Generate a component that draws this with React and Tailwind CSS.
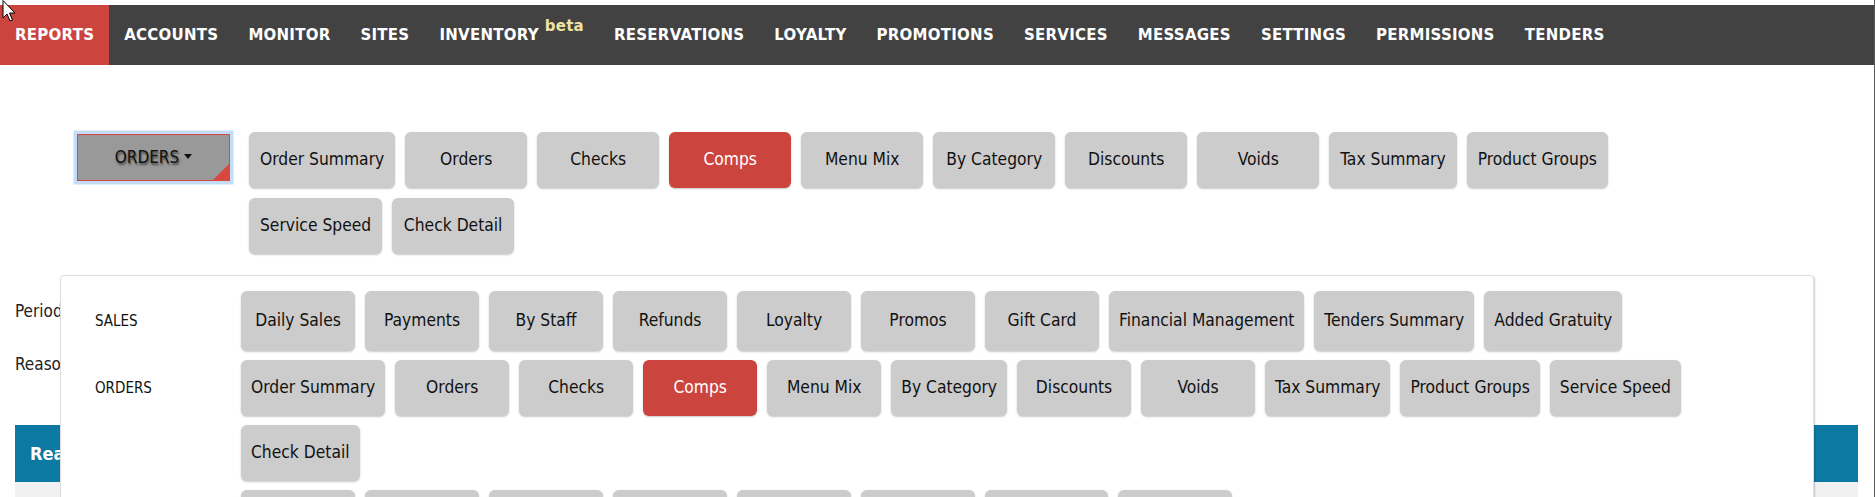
const NAV = [
  'REPORTS',
  'ACCOUNTS',
  'MONITOR',
  'SITES',
  'INVENTORY',
  'RESERVATIONS',
  'LOYALTY',
  'PROMOTIONS',
  'SERVICES',
  'MESSAGES',
  'SETTINGS',
  'PERMISSIONS',
  'TENDERS',
];

const ORDER_REPORTS = [
  'Order Summary',
  'Orders',
  'Checks',
  'Comps',
  'Menu Mix',
  'By Category',
  'Discounts',
  'Voids',
  'Tax Summary',
  'Product Groups',
  'Service Speed',
  'Check Detail',
];

const CATEGORIES = [
  {
    name: 'SALES',
    tall: true,
    items: [
      'Daily Sales',
      'Payments',
      'By Staff',
      'Refunds',
      'Loyalty',
      'Promos',
      'Gift Card',
      'Financial Management',
      'Tenders Summary',
      'Added Gratuity',
    ],
  },
  { name: 'ORDERS', items: ORDER_REPORTS },
  {
    name: 'LABOR',
    items: ['Labor', 'Time Cards', 'Overtime', 'Tips', 'Breaks', 'Schedule', 'Tip Summary', 'Shift Details'],
  },
];

const ACTIVE = 'Comps';

function ReportButton({ label, active, className = '' }) {
  return (
    <button
      className={`flex items-center justify-center rounded-[6px] text-[17.3px] leading-none whitespace-nowrap shadow-[0_1px_2px_rgba(0,0,0,0.22)] ${
        active ? 'bg-[#cc443e] text-white' : 'bg-[#cccccc] text-[#111]'
      } ${className}`}
    >
      {label}
    </button>
  );
}

function Cursor() {
  return (
    <svg className="absolute left-[2px] top-0 w-[16px] h-[24px]" viewBox="0 0 16 24">
      <path d="M1 0.5 L1 18 L5 14 L8 21 L10.5 20 L7.5 13 L13 13 Z" fill="#fff" stroke="#000" strokeWidth="1" />
    </svg>
  );
}

export default function App() {
  return (
    <div className="relative w-full h-[497px] overflow-hidden bg-white border-r border-[#5a5a5a] pt-[5px] font-['DejaVu_Sans_Condensed','DejaVu_Sans',sans-serif] text-[#111]">
      {/* Top navigation */}
      <nav className="flex h-[60px] items-stretch bg-[#424242] font-['DejaVu_Sans',sans-serif] text-[15px] font-bold tracking-[0.25px] text-white">
        {NAV.map((item) => (
          <a
            key={item}
            className={`flex items-center px-[15px] ${item === 'REPORTS' ? 'bg-[#cc443e]' : ''}`}
          >
            {item}
            {item === 'INVENTORY' && (
              <span className="ml-[6px] -mt-[17px] text-[#efe2a2]">beta</span>
            )}
          </a>
        ))}
      </nav>

      {/* Report selector */}
      <div className="flex items-start pt-[67px]">
        <div className="relative ml-[77px] mt-[2px] flex h-[47px] w-[153px] items-center justify-center gap-[5px] border border-[#d9473f] bg-[#999] ring-[3.5px] ring-[#c3ddf9]">
          <span className="text-[17px] text-[#111] [text-shadow:1px_2px_2px_rgba(0,0,0,0.55)]">ORDERS</span>
          <span className="mt-[-2px] h-0 w-0 border-x-[4px] border-t-[5px] border-x-transparent border-t-[#111]" />
          <span className="absolute bottom-0 right-0 h-0 w-0 border-b-[16px] border-l-[16px] border-b-[#d9473f] border-l-transparent" />
        </div>
        <div className="ml-[19px] flex w-[1420px] flex-wrap gap-x-[10px] gap-y-[10px]">
          {ORDER_REPORTS.map((r) => (
            <ReportButton key={r} label={r} active={r === ACTIVE} className="h-[56px] min-w-[122px] px-[11px]" />
          ))}
        </div>
      </div>

      {/* Filters & table behind the menu */}
      <div className="pl-[15px] pr-[16px]">
        <div className="mt-[45px] text-[17px] leading-[24px] text-[#222]">Period</div>
        <div className="mt-[29px] text-[17px] leading-[24px] text-[#222]">Reason</div>
        <div className="mt-[49px] flex h-[57px] items-center bg-[#0c79a2] pl-[15px] text-[18px] font-bold text-white">
          Reason
        </div>
        <div className="h-[60px] bg-[#f1f1f1]" />
      </div>

      {/* Reports menu dropdown */}
      <div className="absolute left-[60px] right-[60px] top-[275px] h-[280px] rounded-[4px] border border-[#dedede] bg-white pl-[34px] pr-[20px] pt-[15px] shadow-[1px_1px_2px_rgba(0,0,0,0.18)]">
        <div className="flex flex-col gap-[9px]">
          {CATEGORIES.map((cat) => (
            <div key={cat.name} className="flex items-start">
              <div className={`flex w-[146px] shrink-0 items-center text-[15px] text-[#111] ${cat.tall ? 'h-[60px]' : 'h-[56px]'}`}>
                {cat.name}
              </div>
              <div className="flex flex-1 flex-wrap gap-x-[10px] gap-y-[9px]">
                {cat.items.map((r) => (
                  <ReportButton
                    key={r}
                    label={r}
                    active={cat.name === 'ORDERS' && r === ACTIVE}
                    className={`${cat.tall ? 'h-[60px]' : 'h-[56px]'} min-w-[114px] px-[10px]`}
                  />
                ))}
              </div>
            </div>
          ))}
        </div>
      </div>

      <Cursor />
    </div>
  );
}
